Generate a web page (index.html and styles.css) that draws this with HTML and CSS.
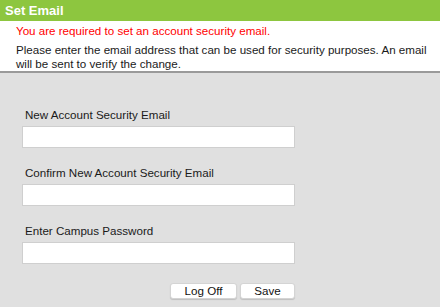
FILE: index.html
```html
<!DOCTYPE html>
<html>
<head>
<meta charset="utf-8">
<link rel="stylesheet" href="styles.css">
</head>
<body>
<div class="header">Set Email</div>
<div class="notice">
  <p class="error">You are required to set an account security email.</p>
  <p class="info">Please enter the email address that can be used for security purposes. An email will be sent to verify the change.</p>
</div>
<div class="panel">
  <form class="form">
    <div class="field">
      <label class="label">New Account Security Email</label>
      <input class="input" type="text">
    </div>
    <div class="field">
      <label class="label">Confirm New Account Security Email</label>
      <input class="input" type="text">
    </div>
    <div class="field">
      <label class="label">Enter Campus Password</label>
      <input class="input" type="password">
    </div>
    <div class="actions">
      <button type="button" class="btn btn-logoff">Log Off</button>
      <button type="button" class="btn btn-save">Save</button>
    </div>
  </form>
</div>
</body>
</html>
```
FILE: styles.css
```css
html, body {
  margin: 0;
  padding: 0;
  height: 100%;
}
body {
  font-family: "Liberation Sans", Arial, sans-serif;
  font-size: 11.6px;
  color: #1a1a1a;
  display: flex;
  flex-direction: column;
  background: #e0e0e0;
}
.header {
  background: #8dc63f;
  color: #ffffff;
  font-weight: bold;
  font-size: 13px;
  height: 21px;
  line-height: 21px;
  padding-left: 5px;
}
.notice {
  background: #ffffff;
  padding: 3px 4px 0 16px;
  border-bottom: 2px solid #9a9a9a;
}
.notice p {
  margin: 0;
  line-height: 14px;
}
.error {
  color: #ff0000;
  margin-bottom: 5px !important;
}
.panel {
  flex: 1;
  background: #e0e0e0;
  padding: 35px 0 0 22px;
}
.form {
  width: 273px;
  margin: 0;
}
.field {
  display: flex;
  flex-direction: column;
  margin-bottom: 18px;
}
.label {
  line-height: 14px;
  padding-left: 3px;
  margin-bottom: 4px;
}
.input {
  box-sizing: border-box;
  height: 22px;
  width: 273px;
  margin: 0;
  border: 1px solid #cfcfcf;
  background: #ffffff;
  font: inherit;
}
.actions {
  display: flex;
  justify-content: flex-end;
  gap: 3px;
  padding-top: 1px;
}
.btn {
  box-sizing: border-box;
  height: 16px;
  padding: 0;
  margin: 0;
  font-family: "Liberation Sans", Arial, sans-serif;
  font-size: 11.6px;
  line-height: 14px;
  color: #111;
  background: #ffffff;
  border: 1px solid #d4d4d4;
  border-radius: 3px;
  box-shadow: 0 1px 1px rgba(0,0,0,0.15);
}
.btn-logoff {
  width: 67px;
}
.btn-save {
  width: 55px;
}
```
